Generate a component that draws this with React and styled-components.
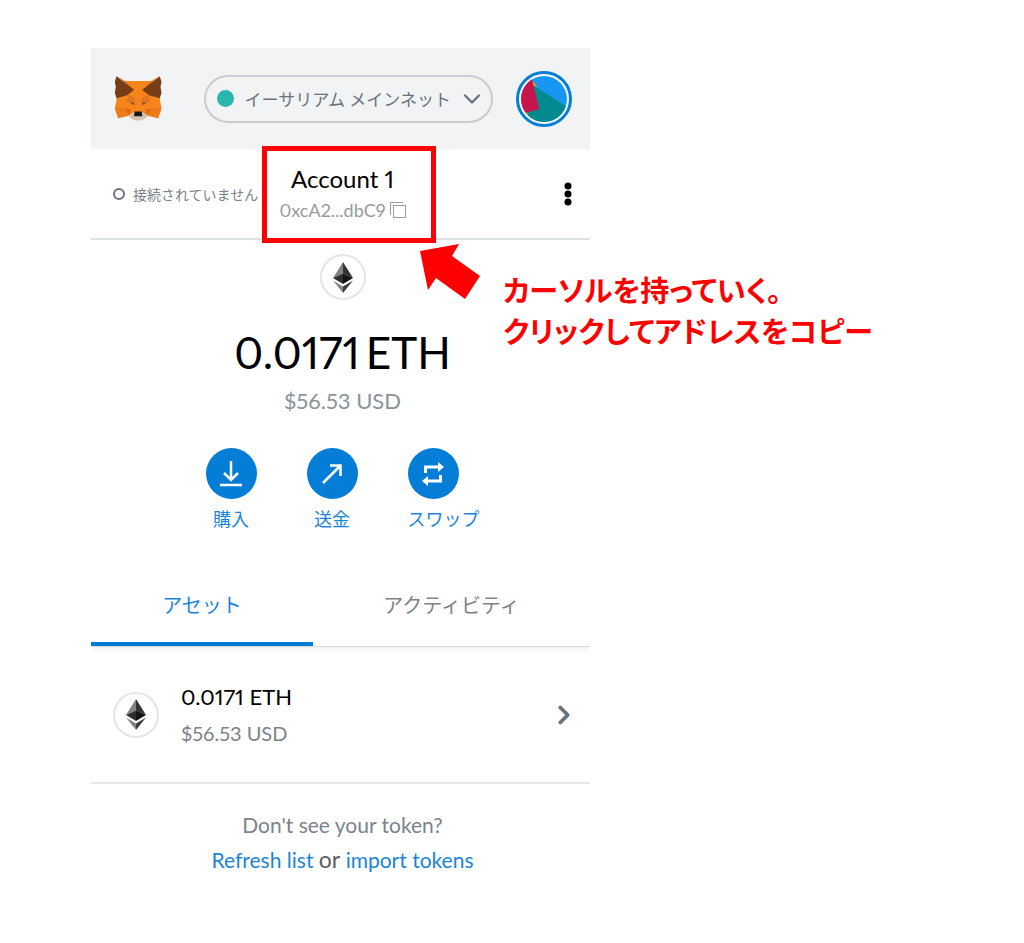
import styled, { createGlobalStyle } from "styled-components"
import { ChevronDown, ChevronRight } from "lucide-react"

const GlobalStyle = createGlobalStyle`
  * {
    box-sizing: border-box;
  }

  body {
    margin: 0;
    background: #fff;
    font-family: Lato, "Noto Sans CJK JP", sans-serif;
    font-variant-numeric: proportional-nums;
  }

  button {
    font: inherit;
    font-variant-numeric: inherit;
    color: inherit;
    padding: 0;
    border: 0;
    background: none;
    cursor: pointer;
  }
`

const FoxLogo = () => (
  <svg width="48" height="45" viewBox="73 95 142 134" aria-label="MetaMask" role="img">
    <polygon fill="#f6851b" points="106,110 183,110 208,160 214,190 204,221 172,213 160,222 128,222 117,213 85,221 75,190 81,160" />
    <polygon fill="#ee7c1a" points="75,190 108,190 122,210 85,221" />
    <polygon fill="#ee7c1a" points="214,190 181,190 167,210 204,221" />
    <polygon fill="#d96b1a" points="104,192 122,194 118,212" />
    <polygon fill="#d96b1a" points="185,192 167,194 171,212" />
    <polygon fill="#763d16" points="80,96 133,136 112,152 80,161 75,145 78,128 75,113" />
    <polygon fill="#763d16" points="209,96 156,136 177,152 209,161 214,145 211,128 214,113" />
    <polygon fill="#e2761b" points="80,96 106,110 133,110 136,137" />
    <polygon fill="#e2761b" points="209,96 183,110 156,110 153,137" />
    <polygon fill="#f6851b" points="106,110 183,110 153,138 136,138" />
    <polygon fill="#e4751f" points="116,151 135,162 136,183 109,170" />
    <polygon fill="#e4751f" points="173,151 154,162 153,183 180,170" />
    <polygon fill="#5a4638" points="121,175 130,174 132,181" />
    <polygon fill="#5a4638" points="168,175 159,174 157,181" />
    <polygon fill="#d7c1b3" points="114,213 132,203 157,203 175,213 159,225 145,228 130,225" />
    <polygon fill="#161616" points="134,201 155,201 157,215 132,215" />
  </svg>
)

const Jazzicon = () => (
  <svg width="46" height="46" viewBox="0 0 136 136">
    <defs>
      <clipPath id="avatar">
        <circle cx="68" cy="68" r="68" />
      </clipPath>
    </defs>
    <g clipPath="url(#avatar)">
      <rect width="136" height="136" fill="#1897f2" />
      <polygon fill="#f59e0b" points="28,8 48,32 30,136 4,100" />
      <polygon fill="#038a8f" points="37,27 136,92 136,136 36,136 18,112" />
      <polygon fill="#c8144c" points="-8,14 32,8 54,98 0,112" />
    </g>
  </svg>
)

const EthIcon = () => (
  <svg width="20" height="31" viewBox="0 0 40 62">
    <polygon fill="#828384" points="20,0 0,32 20,23" />
    <polygon fill="#343434" points="20,0 40,32 20,23" />
    <polygon fill="#2f3030" points="0,32 20,23 20,44" />
    <polygon fill="#131313" points="40,32 20,23 20,44" />
    <polygon fill="#828384" points="0,37 20,49 20,62" />
    <polygon fill="#3c3c3b" points="40,37 20,49 20,62" />
  </svg>
)

const CopyIcon = () => (
  <svg width="16" height="16" viewBox="0 0 16 16" fill="none" stroke="#9b9b9b">
    <path d="M0.5 13V0.5H13" />
    <rect x="3.5" y="3.5" width="12" height="12" />
  </svg>
)

const DownloadIcon = () => (
  <svg width="24" height="26" viewBox="0 0 24 26" fill="none" stroke="#fff" strokeWidth="2.5">
    <path d="M12 0V19M5 12L12 19L19 12M1 24H23" />
  </svg>
)

const SendIcon = () => (
  <svg width="22" height="22" viewBox="0 0 22 22" fill="none" stroke="#fff" strokeWidth="2.5">
    <path d="M2 20L19 3M9 2.500H19.500V13" />
  </svg>
)

const SwapIcon = () => (
  <svg width="24" height="24" viewBox="0 0 24 24" fill="#fff">
    <path d="M3 11V3.500H17V0L23 5L17 10V6.500H6V11Z" />
    <path d="M21 13V20.500H7V24L1 19L7 14V17.500H18V13Z" />
  </svg>
)

const KebabIcon = () => (
  <svg width="8" height="24" viewBox="0 0 8 24">
    <circle cx="4" cy="4" r="3.500" />
    <circle cx="4" cy="12" r="3.500" />
    <circle cx="4" cy="20" r="3.500" />
  </svg>
)

const actions = [
  { label: "購入", icon: <DownloadIcon /> },
  { label: "送金", icon: <SendIcon /> },
  { label: "スワップ", icon: <SwapIcon /> },
]

const App = () => (
  <Page>
    <GlobalStyle />
    <Wallet>
      <Header>
        <FoxLogo />
        <NetworkButton>
          <NetworkDot />
          <NetworkName>イーサリアム メインネット</NetworkName>
          <ChevronDown size={28} strokeWidth={2} />
        </NetworkButton>
        <Avatar aria-label="Account">
          <Jazzicon />
        </Avatar>
      </Header>

      <AccountBar>
        <Status>
          <StatusRing />
          接続されていません
        </Status>
        <AccountButton>
          <AccountName>Account 1</AccountName>
          <Address>
            0xcA2...dbC9
            <CopyIcon />
          </Address>
          <Highlight />
        </AccountButton>
        <MenuButton aria-label="Menu">
          <KebabIcon />
        </MenuButton>
        <Callout>
          <Arrow width="61" height="56" viewBox="0 0 61 56">
            <polygon fill="#f00" points="0,7 39,0 32,12 60,32 45,55 16,34 8,46" />
          </Arrow>
          <Note>
            カーソルを持っていく。
            <br />
            クリックしてアドレスをコピー
          </Note>
        </Callout>
      </AccountBar>

      <Overview>
        <TokenCircle>
          <EthIcon />
        </TokenCircle>
        <Balance>
          <span>0.0171</span>
          <span>ETH</span>
        </Balance>
        <Fiat>$56.53 USD</Fiat>
        <Actions>
          {actions.map((action) => (
            <Action key={action.label}>
              <ActionCircle>{action.icon}</ActionCircle>
              <ActionLabel>{action.label}</ActionLabel>
            </Action>
          ))}
        </Actions>
      </Overview>

      <Tabs role="tablist">
        <Tab role="tab" aria-selected="true" $active $grow={222}>アセット</Tab>
        <Tab role="tab" aria-selected="false" $grow={277}>アクティビティ</Tab>
      </Tabs>

      <Asset>
        <TokenCircle>
          <EthIcon />
        </TokenCircle>
        <AssetText>
          <AssetAmount>0.0171 ETH</AssetAmount>
          <AssetFiat>$56.53 USD</AssetFiat>
        </AssetText>
        <ChevronRight size={30} strokeWidth={3} color="#6a737d" />
      </Asset>

      <Footer>
        <p>Don't see your token?</p>
        <p>
          <Link href="#refresh">Refresh list</Link> <Or>or</Or> <Link href="#import">import tokens</Link>
        </p>
      </Footer>
    </Wallet>
  </Page>
)

const Page = styled.main`
  padding: 48px 91px;
`

const Wallet = styled.section`
  max-width: 499px;
`

const Header = styled.header`
  display: flex;
  align-items: center;
  gap: 23px;
  height: 101px;
  padding: 0 18px 0 23px;
  background: #f2f3f4;
`

const NetworkButton = styled.button`
  display: flex;
  align-items: center;
  height: 48px;
  margin-left: auto;
  padding: 0 5px 0 11px;
  border: 2px solid #c8cbcf;
  border-radius: 24px;
  color: #6a737d;
`

const NetworkDot = styled.span`
  width: 17px;
  height: 17px;
  border-radius: 50%;
  background: #29b6af;
`

const NetworkName = styled.span`
  margin: 0 7px 0 11px;
  font-size: 17px;
  white-space: nowrap;
`

const Avatar = styled.button`
  display: flex;
  align-items: center;
  justify-content: center;
  width: 56px;
  height: 56px;
  border: 3px solid #037dd6;
  border-radius: 50%;
  background: #fff;
`

const AccountBar = styled.div`
  position: relative;
  display: grid;
  grid-template-columns: 1fr auto 1fr;
  align-items: center;
  height: 91px;
  padding: 0 18px 0 22px;
  border-bottom: 2px solid #dfe2e4;
`

const Status = styled.div`
  display: flex;
  align-items: center;
  gap: 8px;
  font-size: 14px;
  color: #7b838b;
  white-space: nowrap;
`

const StatusRing = styled.span`
  width: 12px;
  height: 12px;
  border: 2px solid #6a737d;
  border-radius: 50%;
`

const AccountButton = styled.button`
  position: relative;
  display: flex;
  flex-direction: column;
  align-items: center;
  width: 162px;
`

const AccountName = styled.span`
  font-size: 24px;
  line-height: 32px;
  color: #000;
`

const Address = styled.span`
  display: flex;
  align-items: center;
  gap: 4px;
  font-size: 18px;
  line-height: 30px;
  color: #989a9b;
`

const Highlight = styled.span`
  position: absolute;
  inset: -17px -12px -18px 0;
  border: 5px solid #f00;
`

const MenuButton = styled.button`
  display: flex;
  justify-content: center;
  width: 8px;
  justify-self: end;
`

const Callout = styled.div`
  position: absolute;
  top: 95px;
  left: 329px;
  display: flex;
  align-items: flex-start;
  gap: 22px;
`

const Arrow = styled.svg`
  flex: none;
`

const Note = styled.p`
  margin: 25px 0 0;
  font-family: "Noto Sans CJK JP", sans-serif;
  font-size: 29px;
  font-weight: 700;
  line-height: 41px;
  font-feature-settings: "palt";
  color: #f00;
  white-space: nowrap;
`

const Overview = styled.div`
  display: flex;
  flex-direction: column;
  align-items: center;
  padding: 14px 0 33px 4px;
`

const TokenCircle = styled.span`
  display: flex;
  align-items: center;
  justify-content: center;
  width: 46px;
  height: 46px;
  border: 2px solid #e3e5e6;
  border-radius: 50%;
  background: #fff;
`

const Balance = styled.h1`
  display: flex;
  gap: 6px;
  margin: 24px 0 0;
  font-size: 44px;
  font-weight: 400;
  line-height: 56px;
  color: #000;
`

const Fiat = styled.p`
  margin: 5px 0 0;
  font-size: 22px;
  line-height: 32px;
  color: #8b929a;
`

const Actions = styled.div`
  display: flex;
  gap: 50px;
  margin-top: 31px;
`

const Action = styled.button`
  display: flex;
  flex-direction: column;
  align-items: flex-start;
  color: #1a85d8;
`

const ActionCircle = styled.span`
  display: flex;
  align-items: center;
  justify-content: center;
  width: 51px;
  height: 51px;
  border-radius: 50%;
  background: #037dd6;
  color: #fff;
`

const ActionLabel = styled.span`
  min-width: 51px;
  font-size: 18px;
  line-height: 40px;
  text-align: center;
`

const Tabs = styled.div`
  display: flex;
  height: 75px;
  border-bottom: 1px solid #d6d9dc;
  box-shadow: 0 3px 5px rgba(0, 0, 0, 0.06);
  clip-path: inset(0 0 -10px 0);
`

const Tab = styled.button`
  flex: ${(props) => props.$grow} 1 0;
  height: 74px;
  padding-bottom: ${(props) => (props.$active ? 6 : 10)}px;
  border-bottom: ${(props) => (props.$active ? "4px solid #037dd6" : "0")};
  font-size: 20px;
  color: ${(props) => (props.$active ? "#1a85d8" : "#7b838b")};
`

const Asset = styled.div`
  display: flex;
  align-items: center;
  gap: 22px;
  height: 137px;
  padding: 0 11px 0 22px;
  border-bottom: 2px solid #e6e8e9;
`

const AssetText = styled.div`
  flex: 1;
`

const AssetAmount = styled.div`
  font-size: 22px;
  line-height: 36px;
  color: #000;
`

const AssetFiat = styled.div`
  font-size: 20px;
  line-height: 36px;
  color: #7b838b;
`

const Footer = styled.footer`
  padding: 23px 0 0 4px;
  font-size: 21px;
  line-height: 35px;
  text-align: center;
  color: #7b838b;

  p {
    margin: 0;
  }
`

const Link = styled.a`
  color: #1a85d8;
  text-decoration: none;
`

const Or = styled.span`
  font-size: 23px;
  color: #5b5d60;
`

export default App
